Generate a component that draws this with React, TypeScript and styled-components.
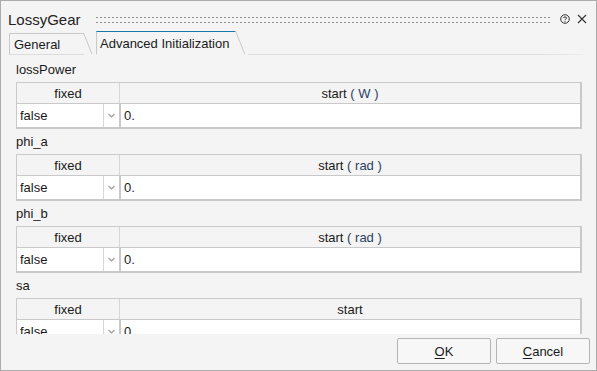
import styled, { createGlobalStyle } from "styled-components";

const GlobalStyle = createGlobalStyle`
  html, body { margin: 0; padding: 0; background: #ffffff; }
  * { box-sizing: border-box; }
`;

type Param = { name: string; unit?: string; value: string };

const params: Param[] = [
  { name: "lossPower", unit: "W", value: "0." },
  { name: "phi_a", unit: "rad", value: "0." },
  { name: "phi_b", unit: "rad", value: "0." },
  { name: "sa", value: "0." },
];

export default function App() {
  return (
    <>
      <GlobalStyle />
      <Dialog>
        <TitleBar>
          <Title>LossyGear</Title>
          <Grip />
          <TitleIcons>
            <svg width="10" height="10" viewBox="0 0 10 10">
              <circle cx="5" cy="5" r="4.3" fill="none" stroke="#333" strokeWidth="1" />
              <path d="M3.4 4 C3.4 2.6 6.6 2.6 6.6 4 C6.6 5 5 5 5 6.2" fill="none" stroke="#333" strokeWidth="1" />
              <circle cx="5" cy="7.6" r="0.6" fill="#333" />
            </svg>
            <svg width="10" height="10" viewBox="0 0 10 10">
              <path d="M1 1 L9 9 M9 1 L1 9" stroke="#333" strokeWidth="1.1" />
            </svg>
          </TitleIcons>
        </TitleBar>

        <TabBar>
          <Tab $width={75}>General</Tab>
          <Tab $width={140} $active>
            Advanced Initialization
          </Tab>
          <TabLine />
        </TabBar>

        <Content>
          {params.map((p) => (
            <Section key={p.name}>
              <Label>{p.name}</Label>
              <Table>
                <HeadCell $first>fixed</HeadCell>
                <HeadCell>
                  start
                  {p.unit && <Unit> ( {p.unit} )</Unit>}
                </HeadCell>
                <SelectCell>
                  <SelectText>false</SelectText>
                  <Arrow>
                    <svg width="7" height="5" viewBox="0 0 7 5">
                      <path d="M0.5 1 L3.5 4 L6.5 1" fill="none" stroke="#9a9a9a" strokeWidth="1.2" />
                    </svg>
                  </Arrow>
                </SelectCell>
                <InputCell>{p.value}</InputCell>
              </Table>
            </Section>
          ))}
        </Content>

        <Footer>
          <Button>
            <u>O</u>K
          </Button>
          <Button>
            <u>C</u>ancel
          </Button>
        </Footer>
      </Dialog>
    </>
  );
}

const Dialog = styled.div`
  width: 597px;
  height: 371px;
  border: 1px solid #acacac;
  background: #f4f4f4;
  display: flex;
  flex-direction: column;
  font-family: "Liberation Sans", Arial, sans-serif;
  font-size: 13px;
  color: #1a1a1a;
  overflow: hidden;
`;

const TitleBar = styled.div`
  height: 30px;
  flex: none;
  display: flex;
  align-items: center;
  padding: 6px 9px 0 7px;
`;

const Title = styled.div`
  font-size: 15px;
  color: #222;
  padding-top: 1px;
`;

const Grip = styled.div`
  flex: 1;
  height: 9px;
  margin: 0 8px 0 14px;
  background-image: radial-gradient(circle, #8f8f8f 0.9px, transparent 1.1px);
  background-size: 4px 5px;
  background-position: 0 0;
`;

const TitleIcons = styled.div`
  display: flex;
  align-items: center;
  gap: 7px;
  padding-bottom: 1px;
`;

const TabBar = styled.div`
  height: 24px;
  flex: none;
  display: flex;
  align-items: flex-end;
  padding-left: 8px;
  margin-right: 13px;
`;

const Tab = styled.div<{ $active?: boolean; $width: number }>`
  position: relative;
  width: ${(p) => p.$width}px;
  height: ${(p) => (p.$active ? "24px" : "22px")};
  display: flex;
  align-items: center;
  padding: 0 0 0 ${(p) => (p.$active ? "3px" : "4px")};
  margin-right: 12px;
  border-top: 1px solid ${(p) => (p.$active ? "#1677a8" : "#c9c9c9")};
  border-left: 1px solid #c9c9c9;
  border-bottom: 1px solid ${(p) => (p.$active ? "transparent" : "#dcdcdc")};
  color: #1a1a1a;
  white-space: nowrap;
  &::after {
    content: "";
    position: absolute;
    top: -1px;
    right: 0;
    width: 10px;
    height: calc(100% + 1px);
    border-right: 1px solid #c9c9c9;
    transform: skewX(22deg);
    transform-origin: top left;
  }
`;

const TabLine = styled.div`
  flex: 1;
  height: 1px;
  background: linear-gradient(to right, #dcdcdc 85%, #eeeeee);
`;

const Content = styled.div`
  flex: 1;
  overflow: hidden;
  padding: 2px 14px 0 15px;
`;

const Section = styled.div`
  display: flex;
  flex-direction: column;
`;

const Label = styled.div`
  height: 25px;
  display: flex;
  align-items: flex-end;
  padding-bottom: 5px;
  color: #1a1a1a;
`;

const Table = styled.div`
  display: grid;
  grid-template-columns: 103px 1fr;
  grid-template-rows: 21px 24px;
  border-top: 1px solid #c9c9c9;
  border-left: 1px solid #c9c9c9;
  border-right: 2px solid #c9c9c9;
  border-bottom: 1px solid #c9c9c9;
`;

const HeadCell = styled.div<{ $first?: boolean }>`
  display: flex;
  align-items: center;
  justify-content: center;
  border-right: ${(p) => (p.$first ? "1px solid #d6d6d6" : "none")};
  border-bottom: 1px solid #c9c9c9;
  color: #1a1a1a;
`;

const Unit = styled.span`
  color: #2a3f63;
  white-space: pre;
`;

const SelectCell = styled.div`
  display: flex;
  background: #ffffff;
  border-right: 1px solid #c9c9c9;
  border-bottom: 1px solid #c9c9c9;
`;

const SelectText = styled.div`
  flex: 1;
  display: flex;
  align-items: center;
  padding-left: 3px;
`;

const Arrow = styled.div`
  width: 16px;
  display: flex;
  align-items: center;
  justify-content: center;
  border-left: 1px solid #d6d6d6;
`;

const InputCell = styled.div`
  display: flex;
  align-items: center;
  padding-left: 3px;
  background: #ffffff;
  border-left: 1px solid #c9c9c9;
  border-bottom: 1px solid #c9c9c9;
`;

const Footer = styled.div`
  height: 36px;
  flex: none;
  display: flex;
  justify-content: flex-end;
  align-items: flex-start;
  gap: 5px;
  padding: 4px 6px 0 0;
`;

const Button = styled.button`
  width: 94px;
  height: 26px;
  border: 1px solid #b4b4b4;
  border-radius: 2px;
  background: #f7f7f7;
  font-family: "Liberation Sans", Arial, sans-serif;
  font-size: 13px;
  color: #1a1a1a;
  padding: 0;
  u { text-decoration-thickness: 1px; text-underline-offset: 2px; }
`;
